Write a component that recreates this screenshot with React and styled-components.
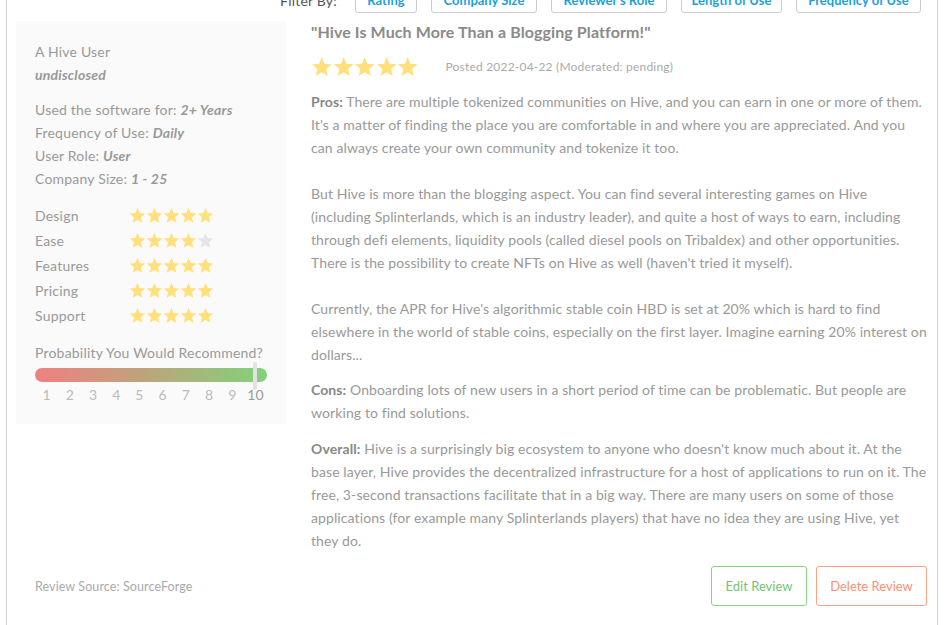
import styled, { createGlobalStyle } from 'styled-components';

const Global = createGlobalStyle`
    html, body {
        margin: 0;
        padding: 0;
        background: #fff;
        overflow: hidden;
    }
    body {
        font-family: Lato, "Open Sans", "Liberation Sans", sans-serif;
        color: #999;
    }
`;

const Page = styled.div`
    padding: 0 13px 0 6px;
`;

const Card = styled.div`
    margin-top: -14px;
    border-left: 1px solid #d2d2d2;
    border-right: 1px solid #d2d2d2;
    padding: 0 10px 20px 9px;
`;

const FilterBar = styled.div`
    display: flex;
    justify-content: flex-end;
    align-items: center;
    gap: 14px;
    height: 28px;
    padding-right: 6px;
    margin-bottom: 7px;
`;

const FilterLabel = styled.span`
    font-size: 14px;
    letter-spacing: 0.2px;
    color: #555;
    margin-right: 4px;
`;

const FilterButton = styled.button`
    font-family: inherit;
    font-size: 13px;
    font-weight: 700;
    color: #1e9fd8;
    background: #fff;
    border: 1px solid #ccc;
    border-radius: 3px;
    height: 26px;
    width: ${props => props.$w}px;
    padding: 0;
`;

const Body = styled.div`
    display: flex;
    align-items: flex-start;
    gap: 25px;
`;

const Sidebar = styled.aside`
    width: 270px;
    box-sizing: border-box;
    background: #fafafa;
    padding: 19px 19px 18px;
    font-size: 14px;
    line-height: 23px;
    letter-spacing: 0.2px;
`;

const Group = styled.div`
    margin-bottom: ${props => props.$gap || 12}px;
`;

const Line = styled.div`
    color: #999;
`;

const Em = styled.em`
    font-weight: 700;
    color: #999;
`;

const RatingRow = styled.div`
    display: flex;
    align-items: center;
    height: 25px;
`;

const RatingLabel = styled.span`
    width: 94px;
`;

const Stars = styled.div`
    display: flex;
`;

const RecommendLabel = styled.div`
    margin-top: 13px;
`;

const Bar = styled.div`
    position: relative;
    margin-top: 4px;
    height: 14px;
    border-radius: 7px;
    background: linear-gradient(to right, #f08080, #c0a27a 45%, #80d37a);
`;

const Marker = styled.span`
    position: absolute;
    top: -6px;
    width: 4px;
    height: 28px;
    border-radius: 2px;
    background: #e2e2e2;
    transform: translateX(-50%);
`;

const Scale = styled.div`
    display: flex;
    margin-top: 1px;
    letter-spacing: 0;
`;

const ScaleNum = styled.span`
    flex: 1;
    text-align: center;
    color: ${props => (props.$active ? '#999' : '#bbb')};
`;

const Main = styled.main`
    flex: 1;
    min-width: 0;
`;

const Title = styled.h2`
    margin: 0;
    font-size: 16px;
    line-height: 22px;
    font-weight: 700;
    letter-spacing: 0.1px;
    color: #8a8a8a;
`;

const Meta = styled.div`
    display: flex;
    align-items: center;
    gap: 27px;
    margin-top: 12px;
    height: 24px;
`;

const Posted = styled.span`
    font-size: 12px;
    letter-spacing: 0.2px;
    color: #aaa;
    margin-top: -2px;
`;

const Text = styled.p`
    margin: ${props => props.$top || 12}px 0 0;
    font-size: 14px;
    line-height: 23px;
    letter-spacing: 0.1px;
    color: #999;
`;

const Label = styled.strong`
    color: #888;
`;

const Footer = styled.div`
    display: flex;
    justify-content: space-between;
    align-items: center;
    margin-top: 14px;
    padding-left: 19px;
`;

const Source = styled.span`
    font-size: 12.5px;
    letter-spacing: 0.1px;
    color: #aaa;
`;

const Actions = styled.div`
    display: flex;
    gap: 9px;
`;

const ActionButton = styled.button`
    font-family: inherit;
    font-size: 13px;
    height: 40px;
    width: ${props => props.$w}px;
    padding: 0;
    background: #fff;
    border-radius: 3px;
    border: 1px solid ${props => props.$color};
    color: ${props => props.$text};
`;

const Star = ({ size, on = true }) => (
    <svg width={size} height={size} viewBox="0 0 24 24">
        <polygon
            points="12,1.2 15,8.6 23,9.3 16.9,14.5 18.8,22.4 12,18.2 5.2,22.4 7.1,14.5 1,9.3 9,8.6"
            fill={on ? '#ffe07d' : '#e6e6e6'}
        />
    </svg>
);

const StarRow = ({ size, count = 5 }) => (
    <Stars>
        {[0, 1, 2, 3, 4].map(i => (
            <Star key={i} size={size} on={i < count} />
        ))}
    </Stars>
);

const ratings = [
    ['Design', 5],
    ['Ease', 4],
    ['Features', 5],
    ['Pricing', 5],
    ['Support', 5],
];

const filters = [
    ['Rating', 62],
    ['Company Size', 106],
    ["Reviewer's Role", 116],
    ['Length of Use', 101],
    ['Frequency of Use', 125],
];

export default () => {
    return (
        <Page>
            <Global />
            <Card>
                <FilterBar>
                    <FilterLabel>Filter By:</FilterLabel>
                    {filters.map(([name, w]) => (
                        <FilterButton key={name} $w={w}>{name}</FilterButton>
                    ))}
                </FilterBar>
                <Body>
                    <Sidebar>
                        <Group>
                            <Line>A Hive User</Line>
                            <Line><Em>undisclosed</Em></Line>
                        </Group>
                        <Group $gap={13}>
                            <Line>Used the software for: <Em>2+ Years</Em></Line>
                            <Line>Frequency of Use: <Em>Daily</Em></Line>
                            <Line>User Role: <Em>User</Em></Line>
                            <Line>Company Size: <Em>1 - 25</Em></Line>
                        </Group>
                        {ratings.map(([name, n]) => (
                            <RatingRow key={name}>
                                <RatingLabel>{name}</RatingLabel>
                                <StarRow size={17} count={n} />
                            </RatingRow>
                        ))}
                        <RecommendLabel>Probability You Would Recommend?</RecommendLabel>
                        <Bar>
                            <Marker style={{ left: '95%' }} />
                        </Bar>
                        <Scale>
                            {[1, 2, 3, 4, 5, 6, 7, 8, 9, 10].map(n => (
                                <ScaleNum key={n} $active={n === 10}>{n}</ScaleNum>
                            ))}
                        </Scale>
                    </Sidebar>
                    <Main>
                        <Title>"Hive Is Much More Than a Blogging Platform!"</Title>
                        <Meta>
                            <StarRow size={21.5} />
                            <Posted>Posted 2022-04-22 (Moderated: pending)</Posted>
                        </Meta>
                        <Text $top={11}>
                            <Label>Pros:</Label> There are multiple tokenized communities on Hive, and you can earn in one or more of them. It's a matter of finding the place you are comfortable in and where you are appreciated. And you can always create your own community and tokenize it too.
                            <br /><br />
                            But Hive is more than the blogging aspect. You can find several interesting games on Hive (including Splinterlands, which is an industry leader), and quite a host of ways to earn, including through defi elements, liquidity pools (called diesel pools on Tribaldex) and other opportunities. There is the possibility to create NFTs on Hive as well (haven't tried it myself).
                            <br /><br />
                            Currently, the APR for Hive's algorithmic stable coin HBD is set at 20% which is hard to find elsewhere in the world of stable coins, especially on the first layer. Imagine earning 20% interest on dollars...
                        </Text>
                        <Text>
                            <Label>Cons:</Label> Onboarding lots of new users in a short period of time can be problematic. But people are working to find solutions.
                        </Text>
                        <Text $top={13}>
                            <Label>Overall:</Label> Hive is a surprisingly big ecosystem to anyone who doesn't know much about it. At the base layer, Hive provides the decentralized infrastructure for a host of applications to run on it. The free, 3-second transactions facilitate that in a big way. There are many users on some of those applications (for example many Splinterlands players) that have no idea they are using Hive, yet they do.
                        </Text>
                    </Main>
                </Body>
                <Footer>
                    <Source>Review Source: SourceForge</Source>
                    <Actions>
                        <ActionButton $w={96} $color="#86d386" $text="#72c472">Edit Review</ActionButton>
                        <ActionButton $w={111} $color="#ffa187" $text="#ff8f72">Delete Review</ActionButton>
                    </Actions>
                </Footer>
            </Card>
        </Page>
    );
};
